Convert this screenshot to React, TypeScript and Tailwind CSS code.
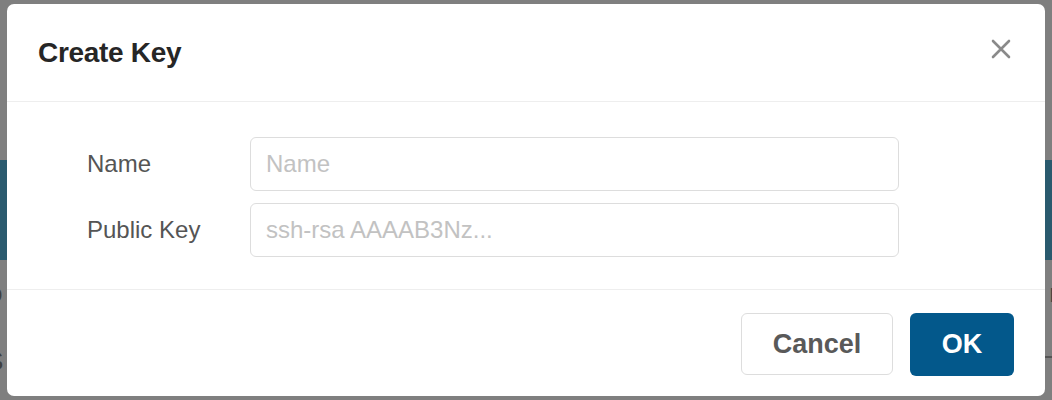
import React from 'react';

const font = { fontFamily: '"Liberation Sans", Arial, Helvetica, sans-serif' };

const Field: React.FC<{ label: string; placeholder: string }> = ({ label, placeholder }) => (
  <div className="flex items-center">
    <label className="w-[163px] shrink-0 text-[24px] text-[#555555]">{label}</label>
    <input
      placeholder={placeholder}
      className="h-[54px] w-[649px] rounded-[6px] border border-[#dddddd] bg-white px-[15px] text-[24px] text-[#555555] outline-none placeholder:text-[#c2c2c2]"
    />
  </div>
);

export default function App() {
  return (
    <div className="relative h-[400px] w-[1052px] overflow-hidden bg-[#7f7f7f]" style={font}>
      {/* page behind the overlay */}
      <div className="flex h-full flex-col">
        <div className="h-[160px]" />
        <div className="h-[100px] bg-[#2a5a6e]" />
        <div className="flex justify-between pt-[20px] text-[26px] leading-none text-[#3f3f3f]">
          <span className="-ml-[12px]">o</span>
          <span className="-mr-[6px]">r</span>
        </div>
        <div className="flex justify-between pt-[42px] text-[26px] leading-none text-[#3f3f3f]">
          <span className="-ml-[14px]">S</span>
          <span className="mt-[8px] h-[2px] w-[8px] bg-[#555555]" />
        </div>
      </div>

      {/* modal */}
      <div className="absolute left-[7px] top-[4px] flex h-[392px] w-[1038px] flex-col rounded-[7px] bg-white">
        <div className="flex h-[98px] shrink-0 items-center justify-between border-b border-[#eeeeee] pl-[31px] pr-[34px]">
          <h1 className="text-[28px] font-bold tracking-[-0.3px] text-[#262626]">Create Key</h1>
          <svg width="20" height="20" viewBox="0 0 20 20" className="mt-[-8px]">
            <path d="M2 2 L18 18 M18 2 L2 18" stroke="#8a8a8a" strokeWidth="2.6" strokeLinecap="round" />
          </svg>
        </div>
        <div className="flex h-[188px] shrink-0 flex-col gap-[12px] border-b border-[#eeeeee] pl-[80px] pt-[35px]">
          <Field label="Name" placeholder="Name" />
          <Field label="Public Key" placeholder="ssh-rsa AAAAB3Nz..." />
        </div>
        <div className="flex flex-1 items-center justify-end gap-[17px] pt-[2px] pr-[31px]">
          <button className="h-[62px] w-[152px] rounded-[6px] border border-[#dddddd] bg-white text-[27px] font-bold text-[#595959]">
            Cancel
          </button>
          <button className="h-[63px] w-[104px] rounded-[6px] bg-[#03588b] text-[27px] font-bold text-white">
            OK
          </button>
        </div>
      </div>
    </div>
  );
}
